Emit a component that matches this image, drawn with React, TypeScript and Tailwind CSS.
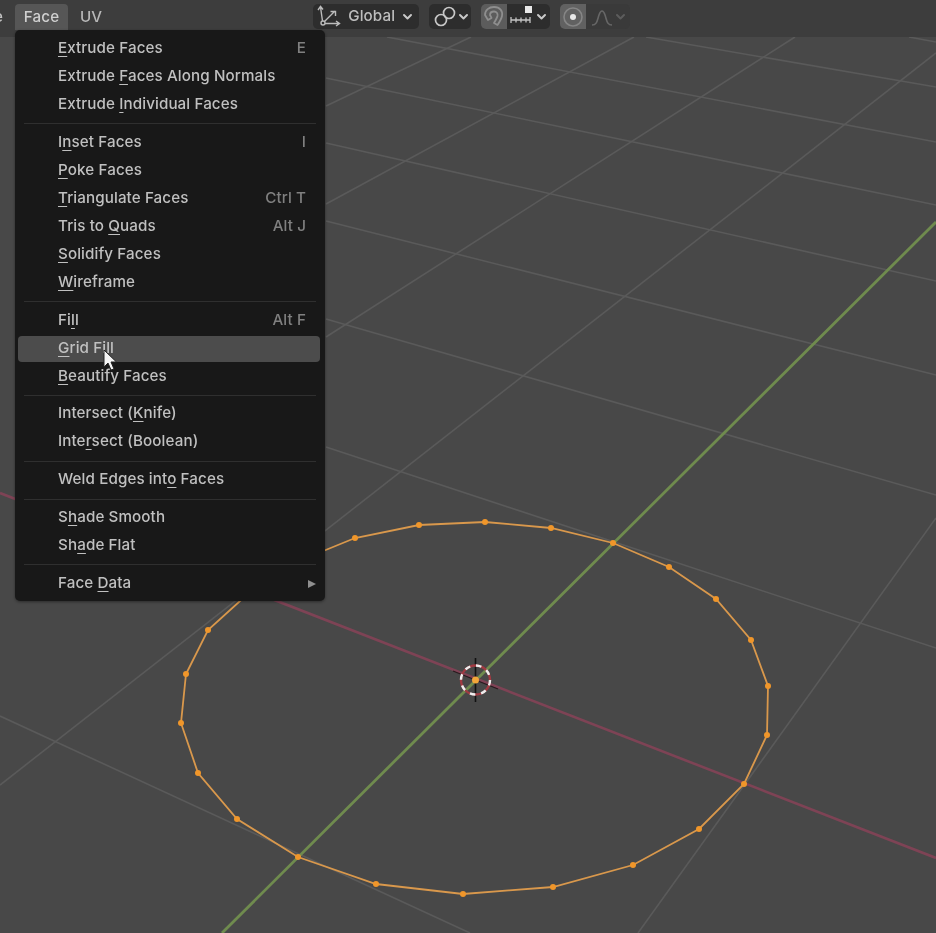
import React from "react";

// Menu rows: label, underlined letter index, shortcut
type Row = { label: string; u: number; key?: string; active?: boolean; sub?: boolean };

const groups: Row[][] = [
  [
    { label: "Extrude Faces", u: 0, key: "E" },
    { label: "Extrude Faces Along Normals", u: 8 },
    { label: "Extrude Individual Faces", u: 8 },
  ],
  [
    { label: "Inset Faces", u: 1, key: "I" },
    { label: "Poke Faces", u: 0 },
    { label: "Triangulate Faces", u: 0, key: "Ctrl T" },
    { label: "Tris to Quads", u: 8, key: "Alt J" },
    { label: "Solidify Faces", u: 0 },
    { label: "Wireframe", u: 0 },
  ],
  [
    { label: "Fill", u: 2, key: "Alt F" },
    { label: "Grid Fill", u: 0, active: true },
    { label: "Beautify Faces", u: 0 },
  ],
  [
    { label: "Intersect (Knife)", u: 11 },
    { label: "Intersect (Boolean)", u: 4 },
  ],
  [{ label: "Weld Edges into Faces", u: 14 }],
  [
    { label: "Shade Smooth", u: 1 },
    { label: "Shade Flat", u: 2 },
  ],
  [{ label: "Face Data", u: 5, sub: true }],
];

const circle = [
  [485, 522], [551, 528], [613, 543], [669, 567], [716, 599], [751, 640], [768, 686], [767, 735],
  [744, 784], [699, 829], [633, 865], [553, 887], [463, 894], [376, 884], [298, 857], [237, 819],
  [198, 773], [181, 723], [186, 674], [208, 630], [272, 572], [355, 538], [419, 525],
];

// grid lines of the floor, x1 y1 x2 y2
const grid = [
  [909, 37, 936, 42],
  [646, 37, 936, 87],
  [387, 37, 936, 142],
  [326, 78, 936, 205],
  [326, 143, 936, 281],
  [326, 221, 936, 375],
  [326, 319, 936, 495],
  [326, 447, 936, 648],
  [0, 716, 470, 933],
  [471, 37, 326, 106],
  [634, 37, 326, 204],
  [795, 37, 326, 337],
  [936, 53, 0, 785],
  [936, 518, 638, 933],
];

function Chevron({ x, y, color = "#c8c8c8" }: { x: number; y: number; color?: string }) {
  return <path d={`M${x} ${y}l3.5 3.500 3.500-3.500`} fill="none" stroke={color} strokeWidth="2" strokeLinecap="round" strokeLinejoin="round" />;
}

function Viewport() {
  return (
    <svg className="absolute inset-0" width="936" height="933" viewBox="0 0 936 933">
      {grid.map((g, i) => (
        <line key={i} x1={g[0]} y1={g[1]} x2={g[2]} y2={g[3]} stroke="#5a5a5a" strokeWidth="1.6" />
      ))}
      <line x1="222" y1="933" x2="936" y2="222" stroke="#6f8b4e" strokeWidth="2.8" />
      <line x1="0" y1="493" x2="936" y2="858" stroke="#7e4355" strokeWidth="2.6" />
      <polygon points={circle.map((p) => p.join(",")).join(" ")} fill="none" stroke="#d9984c" strokeWidth="1.8" />
      {circle.map((p, i) => (
        <circle key={i} cx={p[0]} cy={p[1]} r="3" fill="#f0962a" />
      ))}
      {/* 3D cursor */}
      <line x1="475.5" y1="658" x2="475.5" y2="702" stroke="#111" strokeWidth="1.6" />
      <line x1="453" y1="671" x2="498" y2="689" stroke="#2a1a1e" strokeWidth="1.2" />
      <circle cx="475.5" cy="680" r="14.500" fill="none" stroke="#a03a42" strokeWidth="2.4" />
      <circle cx="475.5" cy="680" r="14.500" fill="none" stroke="#eeeeee" strokeWidth="2.4" strokeDasharray="5.500 5.900" />
      <circle cx="475.5" cy="680" r="3.500" fill="#f2a63a" />
    </svg>
  );
}

function Label({ row }: { row: Row }) {
  return (
    <span className="pb-px">
      {row.label.slice(0, row.u)}
      <span className="underline decoration-1 underline-offset-[3px]">{row.label[row.u]}</span>
      {row.label.slice(row.u + 1)}
    </span>
  );
}

function FaceMenu() {
  return (
    <div className="absolute left-[15px] top-[30px] w-[310px] rounded-[5px] bg-[#181818] pt-[5px] pb-[3px] text-[15.2px] font-medium tracking-[0.1px] text-[#c0c0c0] shadow-[0_1px_3px_rgba(0,0,0,0.4)]">
      {groups.map((group, gi) => (
        <div key={gi}>
          {gi > 0 && (
            <div className="flex h-[9.8px] items-center px-[9px]">
              <div className="h-px w-full bg-[#2f2f2f]" />
            </div>
          )}
          {group.map((row) => (
            <div key={row.label} className="flex h-7 items-center pl-[3px] pr-[5px]">
              <div
                className={`flex h-[26px] w-full items-center justify-between rounded-[4px] pl-[40px] pr-[14px] ${
                  row.active ? "bg-[#4c4c4c]" : ""
                }`}
              >
                <Label row={row} />
                {row.key && <span className="pb-px text-[#808080]">{row.key}</span>}
                {row.sub && (
                  <svg width="10" height="10" viewBox="0 0 10 10" className="-mr-[11px]">
                    <path d="M1 1l8 4-8 4z" fill="#8f8f8f" />
                  </svg>
                )}
              </div>
            </div>
          ))}
        </div>
      ))}
    </div>
  );
}

function Header() {
  return (
    <div className="relative flex h-[37px] items-start bg-[#3d3d3d] pt-1 text-[15.2px] font-medium tracking-[0.1px] text-[#c2c2c2]">
      <div className="flex h-[26px] w-[15px] items-center overflow-hidden">
        <span className="-ml-[6px]">e</span>
      </div>
      <div className="flex h-[26px] w-[53px] items-center justify-center rounded-t-[4px] bg-[#565656] text-[#d0d0d0]">Face</div>
      <div className="ml-[12px] flex h-[26px] items-center text-[#b8b8b8]">UV</div>

      {/* Orientation */}
      <div className="ml-[211px] flex h-[25px] w-[106px] items-center rounded-[5px] bg-[#2d2d2d]">
        <svg width="28" height="25" viewBox="0 0 28 25" fill="none" stroke="#bcbcbc" strokeWidth="1.4" className="ml-[2px]">
          <circle cx="8" cy="19" r="2" />
          <path d="M7.500 17L5.500 3M3 6l2.500-3.500L8 5.500M10 19.500h14M21 17l3.500 2.500-3.500 2.500M9.500 17.500L20 7M15.500 7.500H20.500V12" />
        </svg>
        <span className="ml-[5px] text-[#bebebe]">Global</span>
        <svg width="12" height="8" viewBox="0 0 12 8" className="ml-[7px]">
          <Chevron x={2} y={2} />
        </svg>
      </div>

      {/* Pivot / link */}
      <div className="ml-[10px] flex h-[25px] w-[42px] items-center rounded-[5px] bg-[#2d2d2d]">
        <svg width="26" height="25" viewBox="0 0 26 25" fill="none" stroke="#c8c8c8" strokeWidth="1.7" className="ml-[3px]">
          <circle cx="9" cy="16" r="5.500" />
          <circle cx="17" cy="9" r="5.500" />
        </svg>
        <svg width="12" height="8" viewBox="0 0 12 8">
          <Chevron x={2} y={2} />
        </svg>
      </div>

      {/* Snapping */}
      <div className="ml-[10px] flex h-[25px] w-[26px] items-center justify-center rounded-l-[5px] bg-[#5c5c5c]">
        <svg width="24" height="24" viewBox="0 0 24 24" fill="none" stroke="#8e8e8e" strokeWidth="1.8" strokeLinejoin="round">
          <path d="M3 10C3 5 7 2 12 2c6 0 9 4 8 9-.5 3-2.500 6-4.500 9L12 18c1.500-2.500 3-5 3.500-7 .5-2.500-1-4.500-3.500-4.500S8 8 8 10l1.500 3L6 15z" />
        </svg>
      </div>
      <div className="flex h-[25px] w-[43px] items-center rounded-r-[5px] bg-[#2d2d2d]">
        <svg width="26" height="25" viewBox="0 0 26 25" fill="none" className="ml-[2px]">
          <path d="M2 13v6M2 16h19M7 13.500v5M12 13.500v5M17 13.500v5M21 13v6" stroke="#c4c4c4" strokeWidth="1.3" />
          <rect x="16" y="2" width="7" height="7" fill="#e8e8e8" />
        </svg>
        <svg width="12" height="8" viewBox="0 0 12 8" className="ml-[1px]">
          <Chevron x={2} y={2} />
        </svg>
      </div>

      {/* Proportional editing */}
      <div className="ml-[10px] flex h-[25px] w-[26px] items-center justify-center rounded-l-[5px] bg-[#616161]">
        <svg width="22" height="22" viewBox="0 0 22 22" fill="none">
          <circle cx="11" cy="11" r="9" stroke="#858585" strokeWidth="1.6" />
          <circle cx="11" cy="11" r="3" fill="#e8e8e8" />
        </svg>
      </div>
      <div className="flex h-[25px] w-[44px] items-center rounded-r-[5px] bg-[#3a3a3a]">
        <svg width="24" height="25" viewBox="0 0 24 25" fill="none" className="ml-[4px]">
          <path d="M2 21c5 0 5-4 7-10 1-3 2-4 3-4s2 1 3 4c2 6 2 10 7 10" stroke="#676767" strokeWidth="1.6" />
        </svg>
        <svg width="12" height="8" viewBox="0 0 12 8" className="ml-[1px]">
          <Chevron x={2} y={2} color="#5c5c5c" />
        </svg>
      </div>
    </div>
  );
}

export default function App() {
  return (
    <div className="relative h-[933px] w-[936px] overflow-hidden bg-[#484848] font-['Inter',sans-serif] blur-[0.6px]">
      <Viewport />
      <Header />
      <FaceMenu />
      {/* mouse pointer */}
      <svg className="absolute left-[102px] top-[349px]" width="16" height="24" viewBox="0 0 16 24">
        <path d="M2 1v17l4-4 3 7 3-1-3-7h5.500z" fill="#f4f4f4" stroke="#222" strokeWidth="1" />
      </svg>
    </div>
  );
}
